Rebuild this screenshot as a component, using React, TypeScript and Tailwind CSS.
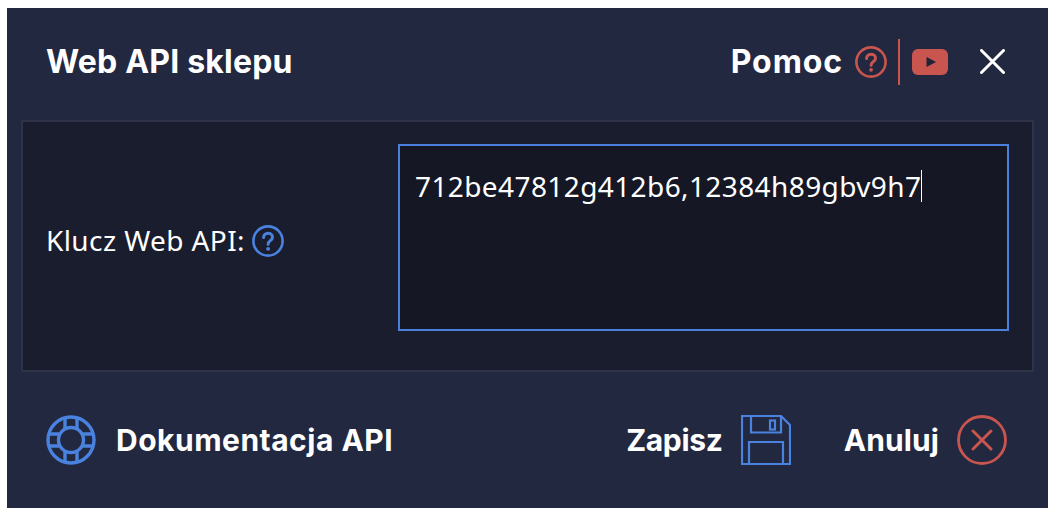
import React from 'react';

const heading = "font-['Inter','Liberation_Sans',sans-serif] font-bold text-white";

function HelpCircle({ className }: { className: string }) {
    return (
        <svg className={className} viewBox="0 0 32 32" fill="none" stroke="currentColor" strokeWidth={2.6} strokeLinecap="round">
            <circle cx="16" cy="16" r="14.6" />
            <path d="M11.6 12.6c0-2.6 2-4.3 4.5-4.3s4.4 1.6 4.4 3.9c0 3.4-4.4 3.5-4.4 7" strokeWidth={3} />
            <circle cx="16.1" cy="23.8" r="1.9" fill="currentColor" stroke="none" />
        </svg>
    );
}

function Lifebuoy() {
    return (
        <svg className="w-[50px] h-[50px] text-[#4a82e0]" viewBox="0 0 50 50" fill="none" stroke="currentColor" strokeWidth={3.4}>
            <circle cx="25" cy="25" r="23" />
            <circle cx="25" cy="25" r="12.5" />
            <path d="M19 3v10M31 3v10M19 37v10M31 37v10M3 19h10M3 31h10M37 19h10M37 31h10" />
        </svg>
    );
}

function SaveDisk() {
    return (
        <svg className="w-[50px] h-[50px] text-[#4a82e0]" viewBox="0 0 50 50" fill="none" stroke="currentColor" strokeWidth={2.2}>
            <path d="M1 1h39l9 9v39H1z" />
            <path d="M10 1v16.5h30V1" />
            <path d="M8 49V27h34v22" />
            <rect x="29" y="5.5" width="5" height="9" />
        </svg>
    );
}

export default function App() {
    return (
        <div className="h-[517px] w-[1050px] bg-white pt-[8px] pl-[7px] overflow-hidden">
            <div className="w-[1041px] h-[500px] bg-[#222840] flex flex-col">
                {/* Header */}
                <div className="h-[112px] shrink-0 flex items-center justify-between pl-[39px] pr-[43px] pb-[5px]">
                    <h1 className={`${heading} text-[32px] tracking-[0.2px]`}>Web API sklepu</h1>
                    <div className="flex items-center">
                        <span className={`${heading} text-[32px] tracking-[0.9px]`}>Pomoc</span>
                        <HelpCircle className="w-[32px] h-[32px] text-[#c9554f] ml-[12px]" />
                        <div className="w-[2px] h-[46px] bg-[#c9554f] ml-[11px]" />
                        <svg className="w-[36px] h-[26px] ml-[12px]" viewBox="0 0 36 26">
                            <rect width="36" height="26" rx="6" fill="#c9554f" />
                            <path d="M14.5 8l9.5 5-9.5 5z" fill="#1f2338" />
                        </svg>
                        <svg className="w-[25px] h-[25px] ml-[32px] text-white" viewBox="0 0 25 25" fill="none" stroke="currentColor" strokeWidth={3} strokeLinecap="round">
                            <path d="M1.5 1.5l22 22M23.5 1.5l-22 22" />
                        </svg>
                    </div>
                </div>

                {/* Panel */}
                <div className="mx-[14px] h-[252px] shrink-0 bg-[#1a1d2e] border-2 border-[#2e3348] flex items-center justify-between pl-[23px] pr-[23px] pb-[17px]">
                    <div className="flex items-center font-['Noto_Sans','Open_Sans',sans-serif] text-[28px] text-white pt-[4px]">
                        <span className="tracking-[0.4px]">Klucz Web API:</span>
                        <HelpCircle className="w-[32px] h-[32px] text-[#4a82e0] ml-[7px] mt-[3px]" />
                    </div>
                    <div className="w-[611px] h-[187px] border-2 border-[#4a80dc] bg-[#151724] px-[15px] py-[22px] flex items-start font-['Noto_Sans','Open_Sans',sans-serif] text-[28px] leading-[36px] text-white">
                        <span className="tracking-[0.4px]">712be47812g412b6,12384h89gbv9h7</span>
                        <span className="w-[1px] h-[32px] bg-white mt-[2px]" />
                    </div>
                </div>

                {/* Footer */}
                <div className="flex-1 flex items-center justify-between pl-[39px] pr-[41px]">
                    <div className="flex items-center">
                        <Lifebuoy />
                        <span className={`${heading} text-[30px] tracking-[0.5px] ml-[20px]`}>Dokumentacja API</span>
                    </div>
                    <div className="flex items-center">
                        <span className={`${heading} text-[30px] tracking-[-0.3px]`}>Zapisz</span>
                        <div className="ml-[18px]"><SaveDisk /></div>
                        <span className={`${heading} text-[30px] tracking-[0.1px] ml-[53px]`}>Anuluj</span>
                        <svg className="w-[50px] h-[50px] ml-[18px] text-[#c9554f]" viewBox="0 0 50 50" fill="none" stroke="currentColor" strokeWidth={2.8} strokeLinecap="round">
                            <circle cx="25" cy="25" r="23.5" />
                            <path d="M16 16l18 18M34 16L16 34" strokeWidth={3} />
                        </svg>
                    </div>
                </div>
            </div>
        </div>
    );
}
